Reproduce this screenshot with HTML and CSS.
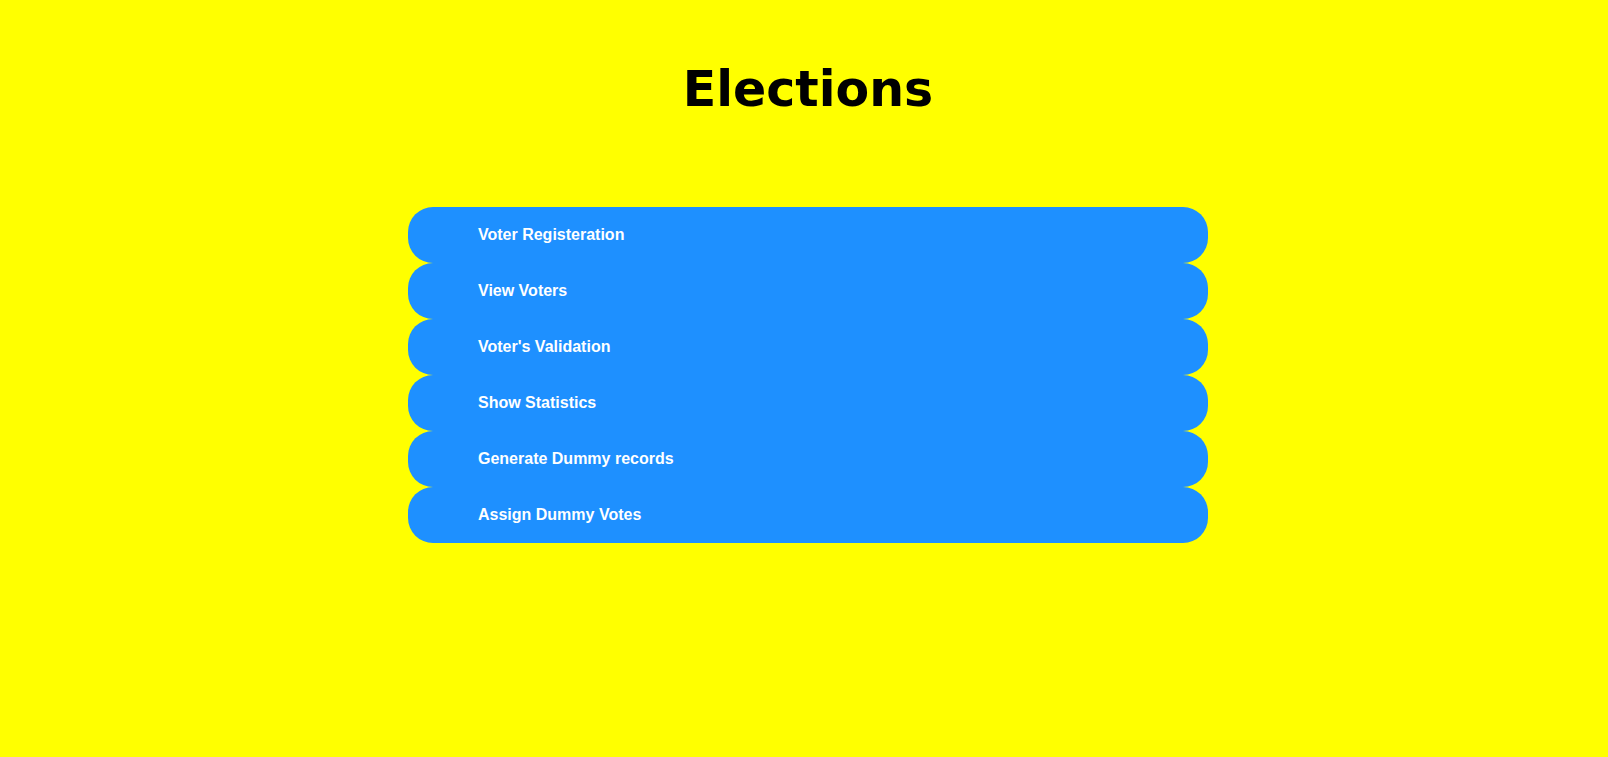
FILE: index.html
```html
<!DOCTYPE html>
<html>
<head>
<meta charset="utf-8">
<title>Elections</title>
<link rel="stylesheet" href="styles.css">
</head>
<body>
<div class="wrap">
  <h1 class="title">Elections</h1>
  <div class="menu">
    <button class="item">Voter Registeration</button>
    <button class="item">View Voters</button>
    <button class="item">Voter's Validation</button>
    <button class="item">Show Statistics</button>
    <button class="item">Generate Dummy records</button>
    <button class="item">Assign Dummy Votes</button>
  </div>
</div>
</body>
</html>
```
FILE: styles.css
```css
html, body {
  margin: 0;
  padding: 0;
  background: #ffff00;
}
.wrap {
  width: 800px;
  margin: 0 auto;
  padding-left: 8px;
}
.title {
  margin: 60px 0 87px 0;
  height: 60px;
  line-height: 60px;
  text-align: center;
  font-family: "Comic Sans MS", "DejaVu Sans", sans-serif;
  font-weight: bold;
  font-size: 49px;
  color: #000;
}
.menu {
  display: flex;
  flex-direction: column;
}
.item {
  display: block;
  width: 800px;
  height: 56px;
  margin: 0;
  padding: 0 0 0 70px;
  border: none;
  border-radius: 25px;
  background: #1e90ff;
  color: #fff;
  text-align: left;
  font-family: "Liberation Sans", Arial, sans-serif;
  font-weight: bold;
  font-size: 16px;
}
```
